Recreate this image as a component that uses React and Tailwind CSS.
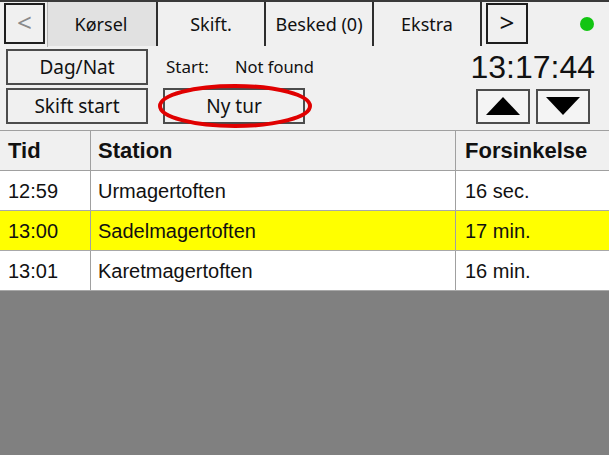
import React from "react";

const ui = { fontFamily: '"Noto Sans", "Open Sans", sans-serif' };
const arial = { fontFamily: '"Liberation Sans", Arial, sans-serif' };

function Tab({ label, active }) {
  return (
    <div
      className={`w-[106px] flex items-center justify-center text-[18px] text-[#111] ${
        active ? "bg-[#e1e1e1]" : "bg-[#f0f0f0]"
      }`}
    >
      {label}
    </div>
  );
}

function Sep() {
  return <div className="w-[2px] bg-[#2e2e2e]" />;
}

function Btn({ label, className = "" }) {
  return (
    <div
      className={`w-[142px] h-[36px] border-2 border-[#4c4c4c] bg-[#f0f0f0] flex items-center justify-center text-[19px] text-[#111] ${className}`}
    >
      {label}
    </div>
  );
}

const rows = [
  { t: "12:59", s: "Urmagertoften", f: "16 sec.", y: false },
  { t: "13:00", s: "Sadelmagertoften", f: "17 min.", y: true },
  { t: "13:01", s: "Karetmagertoften", f: "16 min.", y: false },
];

export default function App() {
  return (
    <div className="w-[609px] h-[455px] bg-[#f0f0f0] flex flex-col overflow-hidden" style={ui}>
      {/* Top tab bar */}
      <div className="h-[47px] border-t-2 border-[#3a3a3a] flex items-stretch">
        <div className="ml-[4px] mt-[1px] mb-[3px] w-[41px] border-2 border-[#1e1e1e] bg-[#f0f0f0] flex items-center justify-center text-[26px] leading-none text-[#8a8a8a] pb-[3px]">
          &lt;
        </div>
        <div className="w-[2px]" />
        <div className="w-[1px] bg-[#b4b4b4]" />
        <div className="flex items-stretch mb-[1px]">
          <Tab label="Kørsel" active />
          <div className="w-[2px] bg-[#e1e1e1]" />
          <Sep />
          <Tab label="Skift." />
          <Sep />
          <Tab label="Besked (0)" />
          <Sep />
          <Tab label="Ekstra" />
          <Sep />
        </div>
        <div className="ml-[4px] mt-[1px] mb-[3px] w-[42px] border-2 border-[#1e1e1e] bg-[#f0f0f0] flex items-center justify-center text-[26px] leading-none text-[#111] pb-[3px]">
          &gt;
        </div>
        <div className="ml-[52px] self-center -mt-[2px] w-[14px] h-[14px] rounded-full bg-[#12c512]" />
      </div>

      {/* Controls */}
      <div className="flex items-center h-[36px] mt-[2px]">
        <Btn label="Dag/Nat" className="ml-[6px]" />
        <span className="ml-[18px] w-[69px] text-[17px] text-[#111]">Start:</span>
        <span className="text-[16.5px] text-[#111]">Not found</span>
        <span className="ml-auto mr-[14px] text-[32px] leading-none text-[#111]" style={arial}>
          13:17:44
        </span>
      </div>
      <div className="flex items-center h-[36px] mt-[3px]">
        <Btn label="Skift start" className="ml-[6px]" />
        <div className="relative ml-[15px]">
          <Btn label="Ny tur" className="text-[18px]" />
          <svg className="absolute left-[-5px] top-[-4px]" width="154" height="44" viewBox="0 0 154 44">
            <ellipse cx="77" cy="22" rx="75" ry="20" fill="none" stroke="#e00000" strokeWidth="4" />
          </svg>
        </div>
        <div className="ml-auto mr-[19px] flex gap-[6px]">
          <div className="w-[54px] h-[35px] border-2 border-[#4c4c4c] bg-[#f4f4f4] flex items-center justify-center">
            <svg width="34" height="18" viewBox="0 0 34 18">
              <polygon points="17,0 34,18 0,18" fill="#000" />
            </svg>
          </div>
          <div className="w-[54px] h-[35px] border-2 border-[#4c4c4c] bg-[#f4f4f4] flex items-center justify-center">
            <svg width="34" height="18" viewBox="0 0 34 18">
              <polygon points="0,0 34,0 17,18" fill="#000" />
            </svg>
          </div>
        </div>
      </div>

      {/* Table */}
      <div className="mt-[6px] border-t border-[#a0a0a0]" style={arial}>
        <div className="grid grid-cols-[91px_365px_1fr] h-[40px] bg-[#f0f0f0] border-b border-[#a0a0a0] text-[22px] font-bold text-[#111]">
          <div className="pl-[8px] flex items-center border-r border-[#a0a0a0]">Tid</div>
          <div className="pl-[7px] flex items-center border-r border-[#a0a0a0]">Station</div>
          <div className="pl-[9px] flex items-center">Forsinkelse</div>
        </div>
        {rows.map((r) => (
          <div
            key={r.t}
            className={`grid grid-cols-[91px_365px_1fr] h-[40px] border-b border-[#a8a8a8] text-[20px] text-[#111] ${
              r.y ? "bg-[#ffff00]" : "bg-white"
            }`}
          >
            <div className="pl-[8px] flex items-center border-r border-[#a0a0a0]">{r.t}</div>
            <div className="pl-[7px] flex items-center border-r border-[#a0a0a0]">{r.s}</div>
            <div className="pl-[9px] flex items-center">{r.f}</div>
          </div>
        ))}
      </div>
      <div className="flex-1 bg-[#808080]" />
    </div>
  );
}
